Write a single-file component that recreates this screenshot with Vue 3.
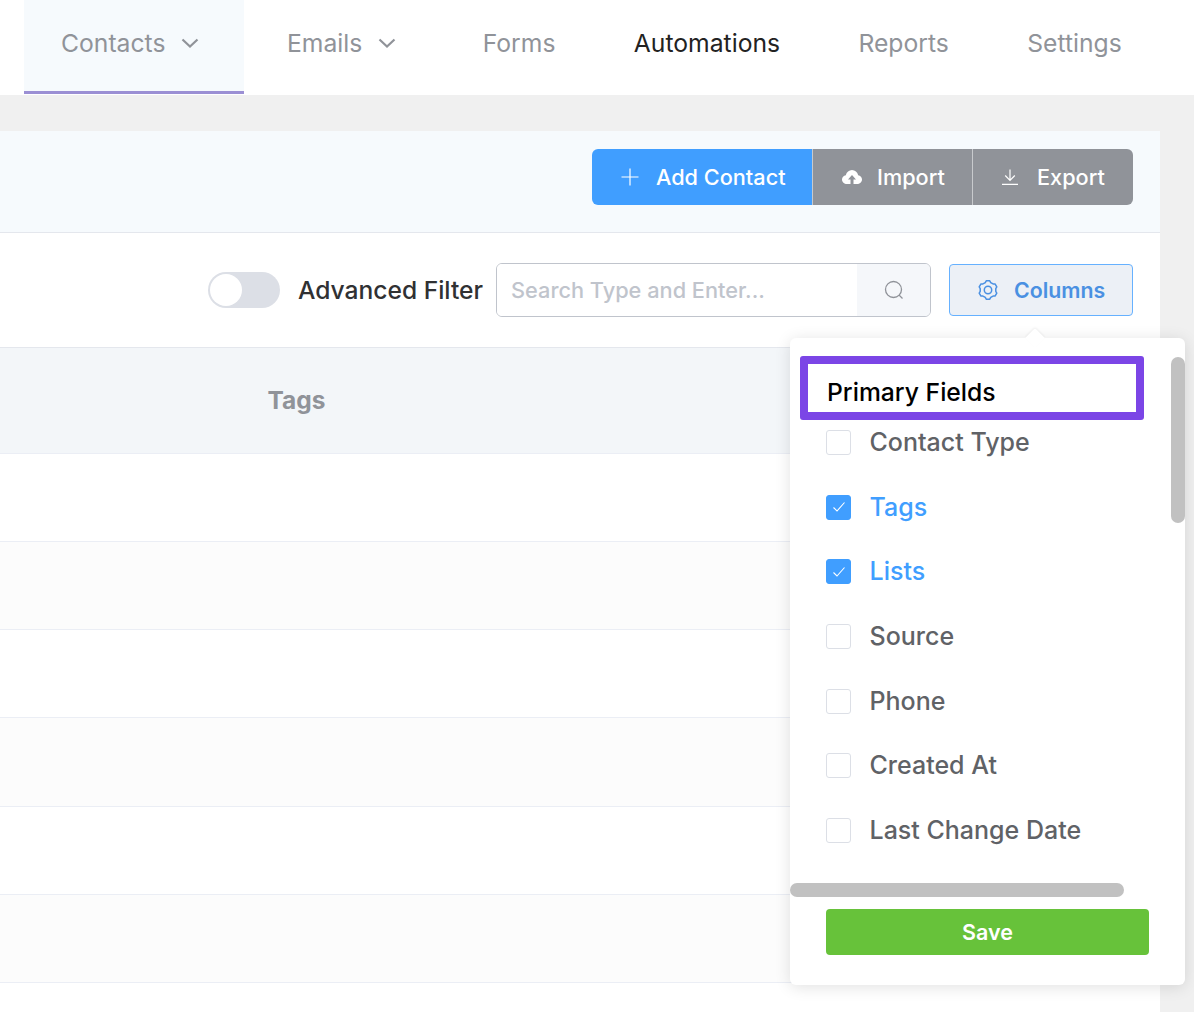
<script setup>
const navItems = [
  { label: 'Contacts', caret: true, cls: 'tab-contacts' },
  { label: 'Emails', caret: true, cls: 'tab-emails' },
  { label: 'Forms', cls: '' },
  { label: 'Automations', cls: 'tab-dark' },
  { label: 'Reports', cls: '' },
  { label: 'Settings', cls: '' }
]

const fields = [
  { label: 'Contact Type', checked: false },
  { label: 'Tags', checked: true },
  { label: 'Lists', checked: true },
  { label: 'Source', checked: false },
  { label: 'Phone', checked: false },
  { label: 'Created At', checked: false },
  { label: 'Last Change Date', checked: false }
]

const rows = [1, 2, 3, 4, 5, 6]

// six toothed gear outline for the Columns button
const pt = (r, deg) => {
  const a = (deg * Math.PI) / 180
  return (10 + r * Math.cos(a)).toFixed(2) + ' ' + (10 - r * Math.sin(a)).toFixed(2)
}
const gearPath = [0, 1, 2, 3, 4, 5]
  .map((i) => {
    const a = 90 + 60 * i
    return `${pt(7.9, a - 20)} ${pt(9.3, a - 11)} ${pt(9.3, a + 11)} ${pt(7.9, a + 20)}`
  })
  .join(' ')
</script>

<template>
  <div class="page">
    <nav class="nav">
      <a v-for="item in navItems" :key="item.label" class="tab" :class="item.cls">
        {{ item.label }}
        <svg v-if="item.caret" class="caret" viewBox="0 0 18 10" width="18" height="10">
          <path d="M1.5 1.5 9 8.5l7.5-7" fill="none" stroke="#909399" stroke-width="2.2" />
        </svg>
      </a>
    </nav>

    <main class="panel">
      <header class="actions">
        <div class="btn-group">
          <button class="btn btn-primary">
            <svg viewBox="0 0 18 18" width="18" height="18">
              <path d="M9 .5v17M.5 9h17" fill="none" stroke="#fff" stroke-width="1.2" />
            </svg>
            Add Contact
          </button>
          <button class="btn btn-grey btn-import">
            <svg viewBox="0 0 20 14" width="20" height="14">
              <path fill="#fff" fill-rule="evenodd" d="M5 14C2.200 14 0 12 0 9.500 0 7.300 1.600 5.500 3.800 5.200 4.600 2.200 7 0 10 0s5.400 2.200 6.200 5.200C18.400 5.500 20 7.300 20 9.500 20 12 17.800 14 15 14zM10 5l-4 4.500h2.500V14h3V9.500H14z" />
            </svg>
            Import
          </button>
          <button class="btn btn-grey btn-export">
            <svg viewBox="0 0 16 16" width="16" height="16">
              <path d="M8 .5v10.500M3.200 6.500 8 11.300l4.800-4.800M0 15.300h16" fill="none" stroke="#fff" stroke-width="1.200" />
            </svg>
            Export
          </button>
        </div>
      </header>

      <section class="filters">
        <span class="toggle"><span class="knob"></span></span>
        <span class="filter-label">Advanced Filter</span>
        <div class="search">
          <input class="search-input" placeholder="Search Type and Enter..." />
          <span class="search-addon">
            <svg viewBox="0 0 20 20" width="20" height="20">
              <circle cx="9.500" cy="9.500" r="8" fill="none" stroke="#909399" stroke-width="1.300" />
              <path d="m15 15 3.500 3.500" fill="none" stroke="#909399" stroke-width="1.300" />
            </svg>
          </span>
        </div>
        <div class="columns-wrap">
          <button class="columns-btn">
            <svg viewBox="0 0 20 20" width="20" height="20">
              <polygon :points="gearPath" fill="none" stroke="#4a90e2" stroke-width="1.500" stroke-linejoin="round" />
              <circle cx="10" cy="10" r="3.700" fill="none" stroke="#4a90e2" stroke-width="1.500" />
            </svg>
            Columns
          </button>

          <div class="popover">
            <span class="arrow"></span>
            <div class="popover-title">Primary Fields</div>
            <ul class="field-list">
              <li v-for="f in fields" :key="f.label" class="field" :class="{ checked: f.checked }">
                <span class="check">
                  <svg v-if="f.checked" viewBox="0 0 14 12" width="14" height="12">
                    <path d="M1.500 6.500 5 10l7.500-8.500" fill="none" stroke="#fff" stroke-width="1.100" />
                  </svg>
                </span>
                {{ f.label }}
              </li>
            </ul>
            <button class="save">Save</button>
            <span class="scroll-v"></span>
            <span class="scroll-h"></span>
          </div>
        </div>
      </section>

      <div class="table">
        <div class="thead">Tags</div>
        <div v-for="r in rows" :key="r" class="row" :class="{ striped: r % 2 === 0 }"></div>
      </div>
    </main>
  </div>
</template>

<style>
html, body {
  margin: 0;
  height: 100%;
  overflow: hidden;
  background: #f0f0f0;
}
</style>

<style scoped>
.page {
  width: 1194px;
  height: 1012px;
  overflow: hidden;
  background: #f0f0f0;
  font-family: Inter, "Liberation Sans", sans-serif;
}

.nav {
  display: flex;
  height: 95px;
  padding-left: 24px;
  background: #fff;
  box-sizing: border-box;
}

.tab {
  display: flex;
  align-items: center;
  gap: 16px;
  height: 95px;
  padding: 0 39.200px 10px;
  box-sizing: border-box;
  font-size: 24.700px;
  color: #909399;
  white-space: nowrap;
}

.tab-contacts {
  width: 220px;
  height: 94px;
  padding: 0 0 6px 37px;
  background: #f6fafd;
  border-bottom: 3px solid #9b8fd4;
}

.tab-emails {
  padding: 0 47.200px 10px 43px;
}

.tab-dark {
  color: #222;
}

.panel {
  width: 1160px;
  height: 881px;
  margin-top: 36px;
  background: #fff;
}

.actions {
  display: flex;
  justify-content: flex-end;
  height: 102px;
  padding: 18px 27px 0 0;
  box-sizing: border-box;
  background: #f6fafd;
  border-bottom: 1px solid #e4e7ed;
}

.btn-group {
  display: flex;
  height: 56px;
}

.btn {
  display: flex;
  align-items: center;
  border: 0;
  padding: 0;
  font: 500 21.700px Inter, "Liberation Sans", sans-serif;
  color: #fff;
}

.btn-primary {
  width: 220px;
  padding-left: 29px;
  gap: 17px;
  background: #409eff;
  border-radius: 6px 0 0 6px;
}

.btn-grey {
  background: #909399;
  border-left: 1px solid #c8cacd;
}

.btn-import {
  width: 160px;
  padding-left: 29px;
  gap: 15px;
}

.btn-export {
  width: 161px;
  padding-left: 29px;
  gap: 19px;
  border-radius: 0 6px 6px 0;
}

.filters {
  display: flex;
  align-items: center;
  justify-content: flex-end;
  height: 114px;
  padding-right: 27px;
  box-sizing: border-box;
}

.toggle {
  position: relative;
  width: 72px;
  height: 36px;
  border-radius: 18px;
  background: #dcdfe6;
}

.knob {
  position: absolute;
  top: 2px;
  left: 2px;
  width: 32px;
  height: 32px;
  border-radius: 50%;
  background: #fff;
}

.filter-label {
  margin: 0 13px 0 18px;
  font-size: 24.600px;
  font-weight: 500;
  color: #303133;
  white-space: nowrap;
}

.search {
  display: flex;
  width: 435px;
  height: 54px;
  box-sizing: border-box;
  border: 1px solid #c0c4cc;
  border-radius: 6px;
  overflow: hidden;
}

.search-input {
  flex: 1;
  min-width: 0;
  border: 0;
  outline: 0;
  padding: 0 0 0 14px;
  font: 500 21.750px Inter, "Liberation Sans", sans-serif;
  background: #fff;
}

.search-input::placeholder {
  color: #c0c4cc;
  opacity: 1;
}

.search-addon {
  display: flex;
  align-items: center;
  justify-content: center;
  width: 73px;
  background: #f5f7fa;
}

.columns-wrap {
  position: relative;
  margin-left: 18px;
}

.columns-btn {
  display: flex;
  align-items: center;
  gap: 16px;
  width: 184px;
  height: 52px;
  padding: 0 0 0 28px;
  box-sizing: border-box;
  border: 1px solid #66b1ff;
  border-radius: 4px;
  background: #ecf0f6;
  font: 600 21.300px Inter, "Liberation Sans", sans-serif;
  color: #4a90e2;
}

.popover {
  position: absolute;
  top: 74px;
  left: -159px;
  width: 395px;
  height: 647px;
  box-sizing: border-box;
  padding: 18px 0 0 10px;
  background: #fff;
  border-radius: 6px;
  box-shadow: 0 2px 16px rgba(0, 0, 0, 0.12);
  z-index: 2;
}

.arrow {
  position: absolute;
  top: -7px;
  left: 238px;
  width: 14px;
  height: 14px;
  background: #fff;
  transform: rotate(45deg);
  border-radius: 2px 0 0 0;
  box-shadow: -1px -1px 2px rgba(0, 0, 0, 0.05);
}

.popover-title {
  width: 344px;
  height: 64px;
  box-sizing: border-box;
  padding: 13px 0 0 19px;
  border: 8px solid #7b45e6;
  border-radius: 3px;
  font-size: 24.700px;
  font-weight: 500;
  line-height: 30px;
  color: #000;
}

.field-list {
  display: flex;
  flex-direction: column;
  gap: 39.700px;
  margin: 10px 0 0;
  padding: 0 0 0 26px;
  list-style: none;
}

.field {
  display: flex;
  align-items: flex-start;
  gap: 18.500px;
  height: 25px;
  font-size: 25px;
  font-weight: 500;
  line-height: 24px;
  white-space: nowrap;
  color: #606266;
}

.field.checked {
  color: #409eff;
}

.check {
  display: flex;
  align-items: center;
  justify-content: center;
  width: 25px;
  height: 25px;
  box-sizing: border-box;
  border: 1px solid #dcdfe6;
  border-radius: 3px;
  background: #fff;
}

.field.checked .check {
  background: #409eff;
  border-color: #409eff;
}

.save {
  display: block;
  width: 323px;
  height: 46px;
  margin: 65.800px 0 0 26px;
  border: 0;
  border-radius: 4px;
  background: #67c23a;
  font: 600 21.500px Inter, "Liberation Sans", sans-serif;
  color: #fff;
}

.scroll-v {
  position: absolute;
  top: 19px;
  right: 0;
  width: 14px;
  height: 166px;
  border-radius: 7px;
  background: #c1c1c1;
}

.scroll-h {
  position: absolute;
  left: 0;
  top: 545px;
  width: 334px;
  height: 14px;
  border-radius: 7px;
  background: #c1c1c1;
}

.thead {
  height: 107px;
  padding: 37px 0 0 267.500px;
  box-sizing: border-box;
  background: #f3f6f9;
  border-top: 1px solid #e4e7ed;
  border-bottom: 1px solid #ebeef5;
  font-size: 24.500px;
  font-weight: 700;
  line-height: 30px;
  color: #909399;
}

.row {
  height: 88.150px;
  box-sizing: border-box;
  border-bottom: 1px solid #ebeef5;
  background: #fff;
}

.row.striped {
  background: #fcfcfc;
}
</style>
